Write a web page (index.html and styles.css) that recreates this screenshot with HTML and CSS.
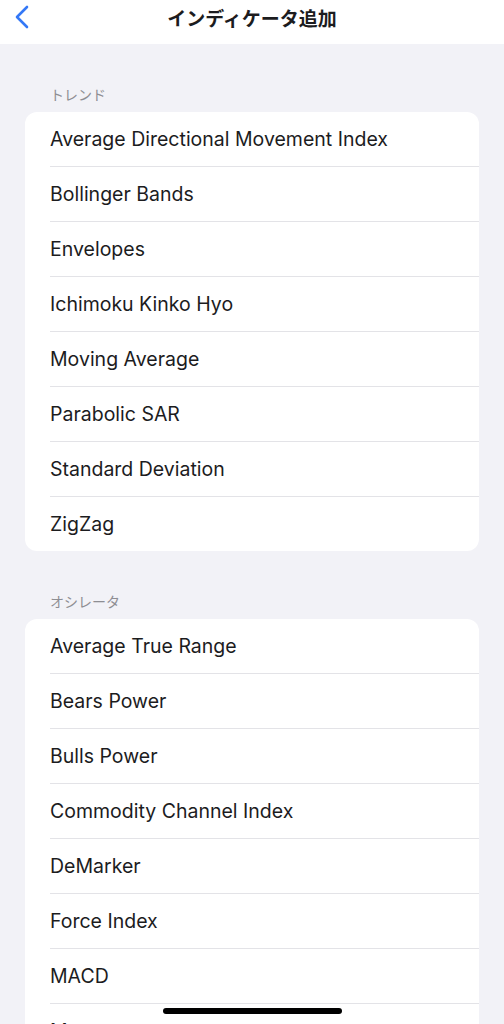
FILE: index.html
```html
<!DOCTYPE html>
<html lang="ja">
<head>
    <meta charset="UTF-8">
    <meta name="viewport" content="width=device-width, initial-scale=1.0">
    <title>インディケータ追加</title>
    <link rel="stylesheet" href="styles.css">
</head>
<body>
    <header class="topbar">
        <button class="back" aria-label="戻る">
            <svg width="16" height="24" viewBox="0 0 16 24">
                <path d="M13 2 L3 12 L13 22" fill="none" stroke="#3478f6" stroke-width="2.6" stroke-linecap="round" stroke-linejoin="round"/>
            </svg>
        </button>
        <h1>インディケータ追加</h1>
    </header>

    <main class="content">
        <section class="group">
            <div class="group-title">トレンド</div>
            <ul class="list">
                <li>Average Directional Movement Index</li>
                <li>Bollinger Bands</li>
                <li>Envelopes</li>
                <li>Ichimoku Kinko Hyo</li>
                <li>Moving Average</li>
                <li>Parabolic SAR</li>
                <li>Standard Deviation</li>
                <li>ZigZag</li>
            </ul>
        </section>

        <section class="group">
            <div class="group-title">オシレータ</div>
            <ul class="list">
                <li>Average True Range</li>
                <li>Bears Power</li>
                <li>Bulls Power</li>
                <li>Commodity Channel Index</li>
                <li>DeMarker</li>
                <li>Force Index</li>
                <li>MACD</li>
                <li>Momentum</li>
            </ul>
        </section>
    </main>

    <div class="home-bar"></div>
</body>
</html>
```

FILE: styles.css
```css
body {
    margin: 0;
    padding: 0;
    font-family: Inter, "Noto Sans CJK JP", sans-serif;
    background-color: #f2f2f7;
    color: #1c1c1e;
    height: 100vh;
    overflow: hidden;
}

.topbar {
    height: 44px;
    background-color: #fff;
    display: flex;
    align-items: center;
    justify-content: center;
    position: relative;
}

.topbar h1 {
    margin: 0;
    font-size: 19px;
    font-weight: 600;
    font-family: "Noto Sans CJK JP", sans-serif;
    margin-top: -10px;
}

.back {
    position: absolute;
    left: 14px;
    top: 5px;
    border: none;
    background: none;
    padding: 0;
    display: flex;
}

.content {
    padding: 0 25px;
}

.group {
    padding-top: 40px;
}

.group-title {
    font-family: "Noto Sans CJK JP", sans-serif;
    font-size: 14px;
    color: #8e8e93;
    padding-left: 25px;
    line-height: 20px;
    margin-bottom: 8px;
}

.list {
    list-style: none;
    margin: 0;
    padding: 0;
    background-color: #fff;
    border-radius: 12px;
}

.list li {
    height: 54px;
    line-height: 54px;
    margin-left: 25px;
    font-size: 19.5px;
    border-bottom: 1px solid #e3e3e7;
}

.list li:last-child {
    border-bottom: none;
}

.home-bar {
    position: fixed;
    left: 163px;
    bottom: 10px;
    width: 179px;
    height: 6px;
    border-radius: 3px;
    background-color: #000;
}
```
